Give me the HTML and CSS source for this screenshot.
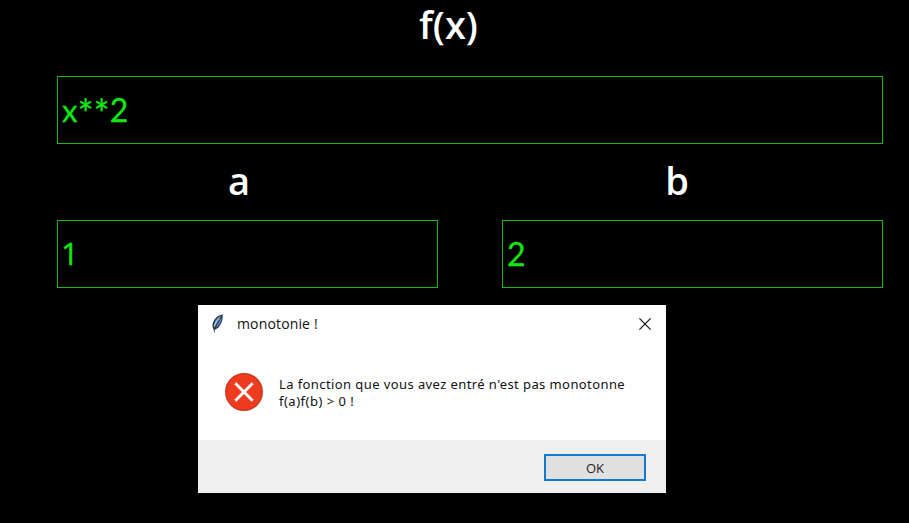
FILE: index.html
```
<!DOCTYPE html>
<html lang="fr">
<head>
<meta charset="utf-8">
<title>monotonie !</title>
<link rel="stylesheet" href="styles.css">
</head>
<body>
<main class="form">
  <div class="field">
    <div class="label label-fx"><span>f(x)</span></div>
    <div class="entry"><span class="x">x</span><span class="stars">**</span><span class="two">2</span></div>
  </div>
  <div class="bounds">
    <div class="field">
      <div class="label label-a"><span>a</span></div>
      <div class="entry"><span class="one">1</span></div>
    </div>
    <div class="field">
      <div class="label label-b"><span>b</span></div>
      <div class="entry"><span class="two">2</span></div>
    </div>
  </div>
</main>
<section class="dialog" role="alertdialog">
  <header class="titlebar">
    <svg class="feather" width="14" height="20" viewBox="0 0 14 20">
      <path d="M12.6.6C8.1 1.1 3.8 5 2.7 9.5c-.5 2.3-.2 4.2.9 5.7l.5 4.3.9-3.9C9.6 14.6 13.6 7 12.6.6Z" fill="#2b394b"/>
      <path d="M11 2C7.6 3.6 4.6 7.5 3.9 11.3l.4 2.3L9.6 5.2Z" fill="#9cc0e6"/>
      <path d="M11.6 3.2 5.6 13.7c3.6-1.6 6.3-6 6-10.5Z" fill="#5584bd"/>
      <path d="M11.1 2.5C8.6 6 5.6 10.5 4.6 16" fill="none" stroke="#26364a" stroke-width=".6"/>
    </svg>
    <span class="title">monotonie !</span>
    <svg class="close" width="12" height="12" viewBox="0 0 12 12"><path d="M.4.4 11.6 11.6M11.6.4.4 11.6" stroke="#111" stroke-width="1.2"/></svg>
  </header>
  <div class="body">
    <svg class="error" width="38" height="38" viewBox="0 0 38 38">
      <circle cx="19" cy="19" r="18.3" fill="#ef3b1d" stroke="#c7371f" stroke-width="1.3"/>
      <path d="M10.3 10.3 27.7 27.7M27.7 10.3 10.3 27.7" stroke="#fff" stroke-width="2.9"/>
    </svg>
    <p class="message"><span class="line1">La fonction que vous avez entré n'est pas monotonne</span><br><span class="line2">f(a)f(b) &gt; 0 !</span></p>
  </div>
  <footer class="footer"><button class="ok">OK</button></footer>
</section>
</body>
</html>
```
FILE: styles.css
```
* { box-sizing: border-box; }
body {
  margin: 0;
  height: 523px;
  overflow: hidden;
  background: #000;
}
.form { padding: 0 26px 0 57px; }
.label {
  display: block;
  height: 76px;
  color: #fff;
  font: 600 38px/48px "Open Sans", "Noto Sans", sans-serif;
  text-align: center;
}
.label-fx { padding-right: 43px; }
.label-a, .label-b { padding-top: 12px; }
.label-a { padding-right: 17px; }
.label-b { padding-right: 31px; }
.entry {
  display: flex;
  align-items: flex-start;
  height: 68px;
  padding: 13px 4px 0;
  border: 1px solid #17b817;
  color: #12e812;
  font: 32px/40px Lato, sans-serif;
  -webkit-text-stroke: 0.3px #12e812;
}
.x { font-size: 31px; }
.stars {
  margin-top: 3px;
  font-size: 38px;
  line-height: 40px;
}
.one {
  margin: -1px 0 0 -1px;
  font-family: "Open Sans", sans-serif;
  font-size: 31px;
}
.bounds {
  display: grid;
  grid-template-columns: 381px 381px;
  justify-content: space-between;
}
.dialog {
  position: absolute;
  left: 198px;
  top: 305px;
  width: 468px;
  height: 188px;
  display: flex;
  flex-direction: column;
  background: #fff;
  color: #111;
  font-family: "Open Sans", "Noto Sans", sans-serif;
}
.titlebar {
  display: flex;
  align-items: center;
  height: 38px;
  padding: 0 15px 0 12px;
}
.title {
  margin: -2px 0 0 13px;
  font-size: 14px;
  letter-spacing: 0.15px;
}
.close { margin-left: auto; }
.body {
  display: flex;
  height: 97px;
  padding: 30px 0 0 27px;
}
.message {
  margin: 3px 0 0 16px;
  font: 13px/17px "Noto Sans", sans-serif;
  letter-spacing: 0.41px;
  white-space: nowrap;
}
.line2 { letter-spacing: 0.5px; }
.footer {
  display: flex;
  justify-content: flex-end;
  align-items: flex-start;
  flex: 1;
  padding: 14px 20px 0 0;
  background: #efefef;
}
.ok {
  width: 102px;
  height: 27px;
  padding: 0;
  border: 2px solid #1379cc;
  background: #e0e0e0;
  color: #222;
  font: 13px/20px "Open Sans", sans-serif;
}
```
